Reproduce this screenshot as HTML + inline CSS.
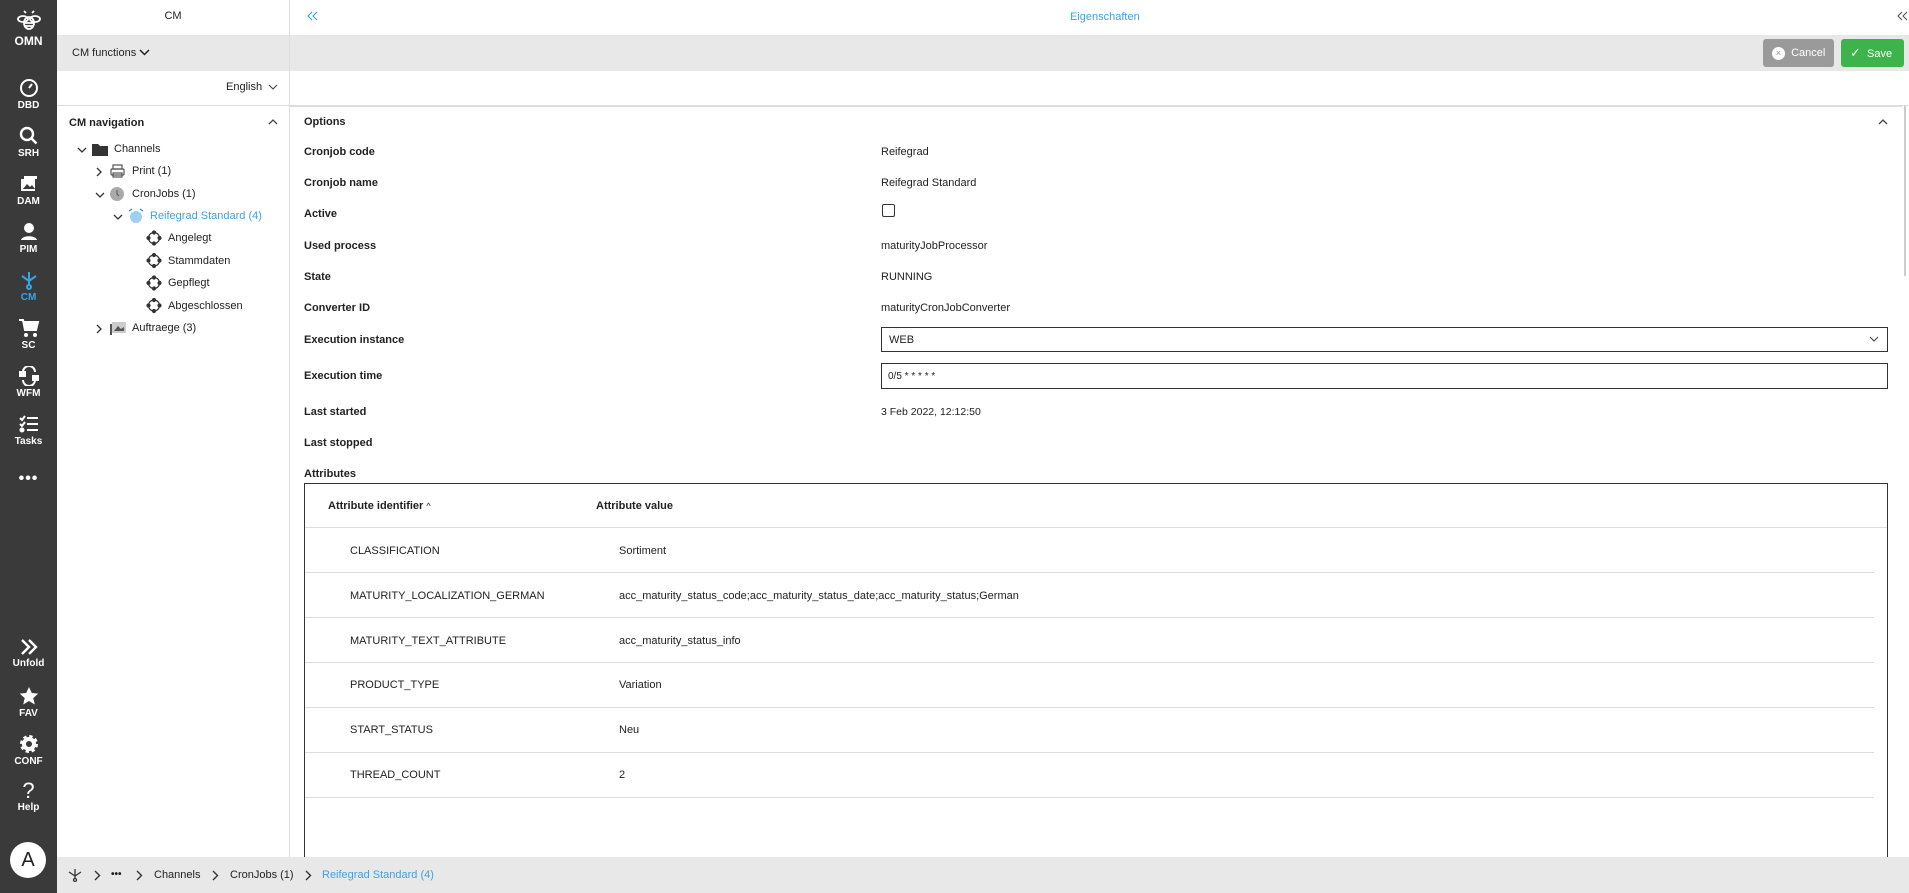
<!DOCTYPE html>
<html><head><meta charset="utf-8"><style>
*{box-sizing:border-box;margin:0;padding:0}
body{width:1909px;height:893px;overflow:hidden;font-family:"Liberation Sans",Arial,sans-serif;font-size:11px;color:#222;background:#fff;position:relative}
.a{position:absolute;white-space:nowrap}
#sb{position:absolute;left:0;top:0;width:57px;height:893px;background:#3a3a3a;color:#fff}
.si{position:absolute;left:0;width:57px;text-align:center;font-size:10px;font-weight:bold}
.si svg{display:block;margin:0 auto 2px}
.lbl{font-weight:bold;left:304px}
.val{left:881px}
.tl{position:absolute;left:305px;width:1569px;height:1px;background:#ddd}
.ch{position:absolute}
</style></head><body>
<div id="sb">
 <div class="si" style="top:10px"><svg width="26" height="22" viewBox="0 0 26 22" fill="none" stroke="#fff" stroke-width="1.8"><ellipse cx="13" cy="13" rx="5" ry="6"/><ellipse cx="7" cy="9" rx="5" ry="3"/><ellipse cx="19" cy="9" rx="5" ry="3"/><path d="M10 3l-2-2M16 3l2-2M8 13h10M8 16h10"/></svg><span style="font-size:12px">OMN</span></div>
 <div class="si" style="top:78px"><svg width="20" height="20" viewBox="0 0 20 20" fill="none" stroke="#fff" stroke-width="2"><circle cx="10" cy="10" r="8"/><path d="M10 10l3-4"/></svg>DBD</div>
 <div class="si" style="top:126px"><svg width="20" height="20" viewBox="0 0 20 20" fill="none" stroke="#fff" stroke-width="2.4"><circle cx="8" cy="8" r="6"/><path d="M12.5 12.5l5 5"/></svg>SRH</div>
 <div class="si" style="top:174px"><svg width="20" height="20" viewBox="0 0 20 20"><rect x="2" y="5" width="14" height="12" fill="#fff"/><rect x="5" y="2" width="13" height="3" fill="#fff"/><path d="M4 15l4-5 3 3 2-2 3 4z" fill="#3a3a3a"/></svg>DAM</div>
 <div class="si" style="top:222px"><svg width="20" height="20" viewBox="0 0 20 20"><circle cx="10" cy="6" r="5" fill="#fff"/><path d="M2 18c1-5 15-5 16 0z" fill="#fff"/></svg>PIM</div>
 <div class="si" style="top:270px;color:#3aa3e3"><svg width="20" height="20" viewBox="0 0 20 20" fill="none" stroke="#3aa3e3" stroke-width="2"><path d="M10 2v9M3 6l7 5 7-5M10 11v4"/><circle cx="10" cy="17" r="2"/></svg>CM</div>
 <div class="si" style="top:318px"><svg width="22" height="20" viewBox="0 0 22 20"><path d="M1 2h4l2 10h11l2-8H6" fill="#fff" stroke="#fff" stroke-width="2"/><circle cx="8" cy="17" r="2" fill="#fff"/><circle cx="17" cy="17" r="2" fill="#fff"/></svg>SC</div>
 <div class="si" style="top:366px"><svg width="22" height="20" viewBox="0 0 22 20" fill="none" stroke="#fff" stroke-width="2"><path d="M5 6a6 6 0 0 1 12 0M17 14a6 6 0 0 1-12 0"/><rect x="2" y="6" width="5" height="4" fill="#fff"/><rect x="15" y="10" width="5" height="4" fill="#fff"/></svg>WFM</div>
 <div class="si" style="top:414px"><svg width="22" height="20" viewBox="0 0 22 20" fill="none" stroke="#fff" stroke-width="2"><path d="M2 4l2 2 3-4M2 10l2 2 3-4M9 4h11M9 10h11M9 16h11"/><circle cx="4" cy="16" r="1.5" fill="#fff"/></svg>Tasks</div>
 <div class="si" style="top:470px;font-size:16px;letter-spacing:1px">•••</div>
 <div class="si" style="top:638px"><svg width="20" height="18" viewBox="0 0 20 18" fill="none" stroke="#fff" stroke-width="2.4"><path d="M3 2l7 7-7 7M10 2l7 7-7 7"/></svg>Unfold</div>
 <div class="si" style="top:686px"><svg width="20" height="20" viewBox="0 0 20 20"><path d="M10 1l2.8 6 6.5.6-5 4.4 1.5 6.5L10 15l-5.8 3.5 1.5-6.5-5-4.4 6.5-.6z" fill="#fff"/></svg>FAV</div>
 <div class="si" style="top:734px"><svg width="20" height="20" viewBox="0 0 20 20"><circle cx="10" cy="10" r="7" fill="#fff" stroke="#fff" stroke-width="4" stroke-dasharray="3 2.5"/><circle cx="10" cy="10" r="3" fill="#3a3a3a"/></svg>CONF</div>
 <div class="si" style="top:780px"><div style="font-size:22px;font-weight:normal;line-height:22px">?</div>Help</div>
 <div style="position:absolute;left:10px;top:842px;width:36px;height:36px;border-radius:50%;background:#fff;color:#222;font-size:20px;text-align:center;line-height:36px">A</div>
</div>
<!-- left panel -->
<div class="a" style="left:57px;top:0;width:232px;height:35px;line-height:33px;text-align:center;font-size:11px">CM</div>
<div class="a" style="left:57px;top:35px;width:1852px;height:36px;background:#e8e8e8"></div>
<div class="a" style="left:72px;top:47px;font-size:11px">CM functions</div>
<svg class="ch" style="left:139px;top:49px" width="11" height="8" fill="none" stroke="#222" stroke-width="1.5"><path d="M1 1l4.5 4.5L10 1"/></svg>
<div class="a" style="left:226px;top:81px;font-size:11px">English</div>
<svg class="ch" style="left:268px;top:84px" width="10" height="7" fill="none" stroke="#444" stroke-width="1.1"><path d="M1 1l4 4 4-4"/></svg>
<div class="a" style="left:57px;top:105px;width:1852px;height:1px;background:#ddd"></div>
<div class="a" style="left:289px;top:0;width:1px;height:857px;background:#ddd"></div>
<div class="a" style="left:69px;top:117px;font-weight:bold">CM navigation</div>
<svg class="ch" style="left:268px;top:118px" width="10" height="7" fill="none" stroke="#444" stroke-width="1.3"><path d="M1 6l4-4 4 4"/></svg>
<svg class="ch" style="left:77px;top:147px" width="10" height="7" fill="none" stroke="#333" stroke-width="1.3"><path d="M1 1l4 4 4-4"/></svg>
<svg class="ch" style="left:96px;top:167px" width="7" height="10" fill="none" stroke="#333" stroke-width="1.3"><path d="M1 1l4 4-4 4"/></svg>
<svg class="ch" style="left:95px;top:192px" width="10" height="7" fill="none" stroke="#333" stroke-width="1.3"><path d="M1 1l4 4 4-4"/></svg>
<svg class="ch" style="left:113px;top:214px" width="10" height="7" fill="none" stroke="#333" stroke-width="1.3"><path d="M1 1l4 4 4-4"/></svg>
<svg class="ch" style="left:96px;top:324px" width="7" height="10" fill="none" stroke="#333" stroke-width="1.3"><path d="M1 1l4 4-4 4"/></svg>
<svg class="a" style="left:92px;top:143px" width="16" height="13"><path d="M0 1h6l2 2h8v10H0z" fill="#333"/></svg>
<div class="a" style="left:114px;top:143px">Channels</div>
<svg class="a" style="left:110px;top:164px" width="15" height="14" fill="none" stroke="#555" stroke-width="1.2"><rect x="3" y="1" width="9" height="4"/><rect x="1" y="5" width="13" height="6" rx="1"/><rect x="3" y="9" width="9" height="4"/></svg>
<div class="a" style="left:132px;top:165px">Print (1)</div>
<svg class="a" style="left:110px;top:187px" width="14" height="14"><circle cx="7" cy="7" r="7" fill="#aaa"/><path d="M7 3v4l2 2" stroke="#555" fill="none"/></svg>
<div class="a" style="left:132px;top:188px">CronJobs (1)</div>
<svg class="a" style="left:128px;top:208px" width="16" height="16"><circle cx="8" cy="9" r="6" fill="#9fd0f0"/><path d="M1 3l3-2M15 3l-3-2" stroke="#3aa3e3" stroke-width="1.5"/></svg>
<div class="a" style="left:150px;top:210px;color:#3aa3e3">Reifegrad Standard (4)</div>
<svg class="a" style="left:146px;top:230px" width="16" height="90" fill="none" stroke="#333" stroke-width="1.2">
 <g><circle cx="8" cy="8" r="5.5"/><circle cx="8" cy="2.5" r="1.5" fill="#333"/><circle cx="13.5" cy="8" r="1.5" fill="#333"/><circle cx="8" cy="13.5" r="1.5" fill="#333"/><circle cx="2.5" cy="8" r="1.5" fill="#333"/></g>
 <g transform="translate(0,22.5)"><circle cx="8" cy="8" r="5.5"/><circle cx="8" cy="2.5" r="1.5" fill="#333"/><circle cx="13.5" cy="8" r="1.5" fill="#333"/><circle cx="8" cy="13.5" r="1.5" fill="#333"/><circle cx="2.5" cy="8" r="1.5" fill="#333"/></g>
 <g transform="translate(0,45)"><circle cx="8" cy="8" r="5.5"/><circle cx="8" cy="2.5" r="1.5" fill="#333"/><circle cx="13.5" cy="8" r="1.5" fill="#333"/><circle cx="8" cy="13.5" r="1.5" fill="#333"/><circle cx="2.5" cy="8" r="1.5" fill="#333"/></g>
 <g transform="translate(0,67.5)"><circle cx="8" cy="8" r="5.5"/><circle cx="8" cy="2.5" r="1.5" fill="#333"/><circle cx="13.5" cy="8" r="1.5" fill="#333"/><circle cx="8" cy="13.5" r="1.5" fill="#333"/><circle cx="2.5" cy="8" r="1.5" fill="#333"/></g>
</svg>
<div class="a" style="left:168px;top:232px">Angelegt</div>
<div class="a" style="left:168px;top:255px">Stammdaten</div>
<div class="a" style="left:168px;top:277px">Gepflegt</div>
<div class="a" style="left:168px;top:300px">Abgeschlossen</div>
<svg class="a" style="left:110px;top:322px" width="16" height="13"><rect x="0" y="2" width="2" height="11" fill="#555"/><rect x="2" y="0" width="14" height="11" fill="#ccc"/><path d="M4 9l4-5 3 3 3-2v4z" fill="#555"/></svg>
<div class="a" style="left:132px;top:322px">Auftraege (3)</div>
<!-- header -->
<svg class="ch" style="left:307px;top:11px" width="12" height="10" fill="none" stroke="#3aa3e3" stroke-width="1.2"><path d="M5 1L1 5l4 4M10 1L6 5l4 4"/></svg>
<div class="a" style="left:1070px;top:11px;color:#3aa3e3">Eigenschaften</div>
<svg class="ch" style="left:1897px;top:11px" width="12" height="10" fill="none" stroke="#555" stroke-width="1.1"><path d="M5 1L1 5l4 4M10 1L6 5l4 4"/></svg>
<div class="a" style="left:1763px;top:39px;width:71px;height:28px;background:#9a9a9a;border-radius:3px;color:#fff;line-height:28px;padding-left:9px"><span style="display:inline-block;width:13px;height:13px;border-radius:50%;background:#fff;color:#999;font-size:9px;line-height:13px;text-align:center;vertical-align:middle">×</span>&nbsp; Cancel</div>
<div class="a" style="left:1841px;top:39px;width:63px;height:28px;background:#3cb44b;border-radius:3px;color:#fff;line-height:28px;padding-left:9px"><span style="font-size:13px">&#10003;</span>&nbsp; Save</div>
<!-- content -->
<div class="a" style="left:290px;top:106px;width:1612px;height:1px;background:#ddd"></div>
<div class="a" style="left:1904px;top:106px;width:2px;height:170px;background:#ccc"></div>
<div class="a lbl" style="top:116px">Options</div>
<svg class="ch" style="left:1878px;top:118px" width="10" height="7" fill="none" stroke="#444" stroke-width="1.3"><path d="M1 6l4-4 4 4"/></svg>
<div class="a lbl" style="top:146px">Cronjob code</div><div class="a val" style="top:146px">Reifegrad</div>
<div class="a lbl" style="top:177px">Cronjob name</div><div class="a val" style="top:177px">Reifegrad Standard</div>
<div class="a lbl" style="top:208px">Active</div><div class="a" style="left:882px;top:204px;width:13px;height:13px;border:1px solid #333;border-radius:2px"></div>
<div class="a lbl" style="top:240px">Used process</div><div class="a val" style="top:240px">maturityJobProcessor</div>
<div class="a lbl" style="top:271px">State</div><div class="a val" style="top:271px">RUNNING</div>
<div class="a lbl" style="top:302px">Converter ID</div><div class="a val" style="top:302px">maturityCronJobConverter</div>
<div class="a lbl" style="top:334px">Execution instance</div>
<div class="a" style="left:881px;top:327px;width:1007px;height:25px;border:1px solid #333;padding:6px 7px">WEB</div>
<svg class="ch" style="left:1869px;top:336px" width="10" height="7" fill="none" stroke="#444" stroke-width="1.1"><path d="M1 1l4 4 4-4"/></svg>
<div class="a lbl" style="top:370px">Execution time</div>
<div class="a" style="left:881px;top:363px;width:1007px;height:26px;border:1px solid #333;padding:7px 6px;font-size:10px">0/5 * * * * *</div>
<div class="a lbl" style="top:406px">Last started</div><div class="a val" style="top:406px;font-size:10.5px">3 Feb 2022, 12:12:50</div>
<div class="a lbl" style="top:437px">Last stopped</div>
<div class="a lbl" style="top:468px">Attributes</div>
<div class="a" style="left:304px;top:483px;width:1584px;height:380px;border:1px solid #333"></div>
<div class="a" style="left:328px;top:500px;font-weight:bold">Attribute identifier <span style="font-weight:normal;font-size:9px">^</span></div>
<div class="a" style="left:596px;top:500px;font-weight:bold">Attribute value</div>
<div class="a" style="left:305px;top:527px;width:1582px;height:1px;background:#ddd"></div>
<div class="a" style="left:350px;top:545px">CLASSIFICATION</div><div class="a" style="left:619px;top:545px">Sortiment</div>
<div class="tl" style="top:572px"></div>
<div class="a" style="left:350px;top:590px">MATURITY_LOCALIZATION_GERMAN</div><div class="a" style="left:619px;top:590px">acc_maturity_status_code;acc_maturity_status_date;acc_maturity_status;German</div>
<div class="tl" style="top:617px"></div>
<div class="a" style="left:350px;top:635px">MATURITY_TEXT_ATTRIBUTE</div><div class="a" style="left:619px;top:635px">acc_maturity_status_info</div>
<div class="tl" style="top:662px"></div>
<div class="a" style="left:350px;top:679px">PRODUCT_TYPE</div><div class="a" style="left:619px;top:679px">Variation</div>
<div class="tl" style="top:707px"></div>
<div class="a" style="left:350px;top:724px">START_STATUS</div><div class="a" style="left:619px;top:724px">Neu</div>
<div class="tl" style="top:752px"></div>
<div class="a" style="left:350px;top:769px">THREAD_COUNT</div><div class="a" style="left:619px;top:769px">2</div>
<div class="tl" style="top:797px"></div>
<!-- breadcrumb -->
<div class="a" style="left:57px;top:857px;width:1852px;height:36px;background:#e8e8e8"></div>
<svg class="a" style="left:68px;top:868px" width="14" height="14" fill="none" stroke="#333" stroke-width="1.3"><path d="M7 1v7M1 4l6 4 6-4M7 8v2"/><circle cx="7" cy="12" r="1.5"/></svg>
<svg class="ch" style="left:94px;top:870px" width="7" height="11" fill="none" stroke="#333" stroke-width="1.4"><path d="M1 1l4.5 4.5L1 10"/></svg>
<div class="a" style="left:111px;top:869px;font-size:10px;font-weight:bold">•••</div>
<svg class="ch" style="left:136px;top:870px" width="7" height="11" fill="none" stroke="#333" stroke-width="1.4"><path d="M1 1l4.5 4.5L1 10"/></svg>
<div class="a" style="left:154px;top:869px">Channels</div>
<svg class="ch" style="left:212px;top:870px" width="7" height="11" fill="none" stroke="#333" stroke-width="1.4"><path d="M1 1l4.5 4.5L1 10"/></svg>
<div class="a" style="left:230px;top:869px">CronJobs (1)</div>
<svg class="ch" style="left:305px;top:870px" width="7" height="11" fill="none" stroke="#333" stroke-width="1.4"><path d="M1 1l4.5 4.5L1 10"/></svg>
<div class="a" style="left:322px;top:869px;color:#3aa3e3">Reifegrad Standard (4)</div>
</body></html>
